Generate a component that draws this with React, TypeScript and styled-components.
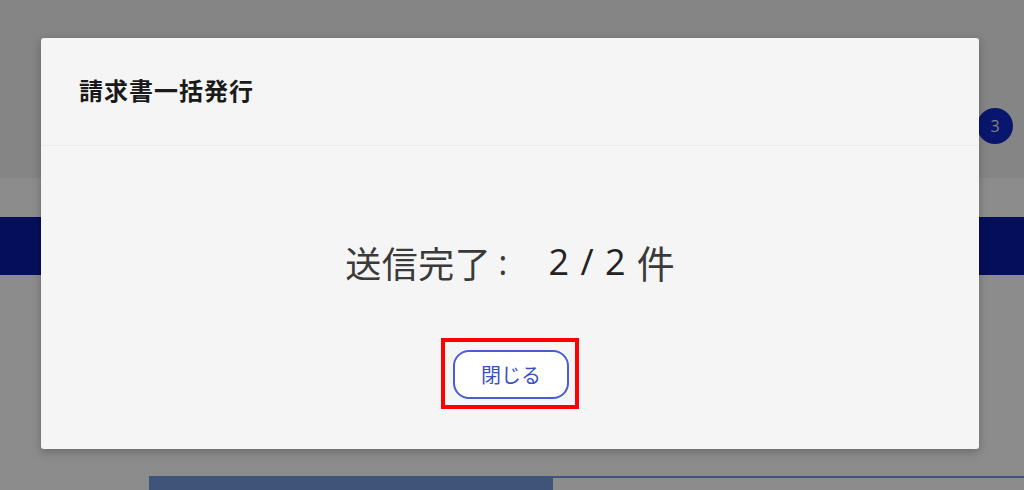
import React from "react";
import styled, { createGlobalStyle } from "styled-components";

const GlobalStyle = createGlobalStyle`
  html, body {
    margin: 0;
    padding: 0;
    width: 1024px;
    height: 490px;
    overflow: hidden;
    font-family: "Noto Sans CJK JP", "Noto Sans", sans-serif;
  }
`;

const Page = styled.div`
  position: relative;
  width: 1024px;
  height: 490px;
  display: flex;
  flex-direction: column;
  background: #ffffff;
`;

const Header = styled.div`
  height: 178px;
  background: #f2f2f2;
  display: flex;
  justify-content: flex-end;
  align-items: flex-start;
  padding: 108px 11px 0 0;
  box-sizing: border-box;
`;

const Badge = styled.div`
  width: 36px;
  height: 36px;
  border-radius: 50%;
  background: #1228c8;
  color: #e8e8e8;
  font-family: "Open Sans", sans-serif;
  font-size: 16px;
  display: flex;
  align-items: center;
  justify-content: center;
`;

const Spacer = styled.div`
  height: 39px;
`;

const NavBar = styled.div`
  height: 58px;
  background: #0a1ba4;
`;

const Content = styled.div`
  flex: 1;
  display: flex;
  flex-direction: column;
  justify-content: flex-end;
  padding-left: 149px;
`;

const Tabs = styled.div`
  height: 12px;
  display: flex;
  border-top: 2px solid #7399db;
`;

const Tab = styled.div<{ $active?: boolean }>`
  width: ${(p) => (p.$active ? "404px" : "auto")};
  flex: ${(p) => (p.$active ? "none" : "1")};
  background: ${(p) => (p.$active ? "#7399db" : "transparent")};
`;

const Backdrop = styled.div`
  position: absolute;
  inset: 0;
  background: rgba(0, 0, 0, 0.45);
`;

const Modal = styled.div`
  position: absolute;
  left: 41px;
  top: 38px;
  width: 938px;
  height: 411px;
  background: #f5f5f5;
  border-radius: 3px;
  box-shadow: 0 3px 10px rgba(0, 0, 0, 0.25);
  display: flex;
  flex-direction: column;
`;

const ModalHeader = styled.div`
  height: 108px;
  box-sizing: border-box;
  border-bottom: 1px solid #ebebeb;
  display: flex;
  align-items: center;
  padding: 0 0 4px 38px;
`;

const Title = styled.h2`
  margin: 0;
  font-size: 24px;
  font-weight: 700;
  color: #1a1a1a;
  letter-spacing: 1px;
  line-height: 1;
`;

const ModalBody = styled.div`
  flex: 1;
  display: flex;
  flex-direction: column;
  align-items: center;
  padding-top: 96px;
`;

const Status = styled.div`
  display: flex;
  align-items: center;
  height: 40px;
  line-height: 40px;
  font-size: 36px;
  color: #3a3a3a;
`;

const Label = styled.span`
  letter-spacing: 0.5px;
`;

const Colon = styled.span`
  font-family: "Open Sans", sans-serif;
  font-size: 35px;
  margin-left: 7px;
`;

const Count = styled.span`
  font-family: "Open Sans", "Noto Sans CJK JP", sans-serif;
  font-size: 36px;
  color: #222222;
  word-spacing: 2px;
  margin-left: 41px;
  margin-right: 11px;
`;

const Unit = styled.span`
  font-size: 38px;
`;

const Highlight = styled.div`
  margin-top: 56px;
  border: 4px solid #ff0000;
  padding: 8px 6px 6px 8px;
`;

const CloseButton = styled.button`
  width: 116px;
  height: 49px;
  border: 2px solid #4b5dd0;
  border-radius: 16px;
  background: #ffffff;
  color: #3b4fc4;
  font-family: "Noto Sans CJK JP", sans-serif;
  font-size: 20px;
  cursor: pointer;
`;

function App() {
  return (
    <>
      <GlobalStyle />
      <Page>
        <Header>
          <Badge>3</Badge>
        </Header>
        <Spacer />
        <NavBar />
        <Content>
          <Tabs>
            <Tab $active />
            <Tab />
          </Tabs>
        </Content>
        <Backdrop />
        <Modal>
          <ModalHeader>
            <Title>請求書一括発行</Title>
          </ModalHeader>
          <ModalBody>
            <Status>
              <Label>送信完了</Label>
              <Colon>:</Colon>
              <Count>2 / 2</Count>
              <Unit>件</Unit>
            </Status>
            <Highlight>
              <CloseButton>閉じる</CloseButton>
            </Highlight>
          </ModalBody>
        </Modal>
      </Page>
    </>
  );
}

export default App;
